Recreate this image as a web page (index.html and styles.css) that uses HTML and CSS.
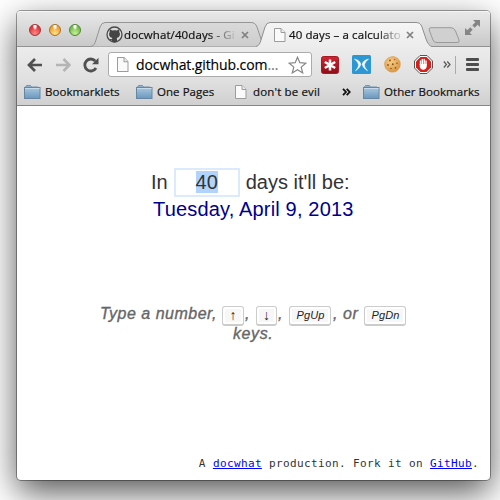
FILE: index.html
```
<!DOCTYPE html>
<html lang="en">
<head>
<meta charset="utf-8">
<title>40 days – a calculator</title>
<link rel="stylesheet" href="styles.css">
</head>
<body>
<svg class="defs" width="0" height="0" aria-hidden="true">
  <defs>
    <linearGradient id="folderFill" x1="0" y1="0" x2="0" y2="1"><stop offset="0" stop-color="#a9c7df"/><stop offset="1" stop-color="#6998bd"/></linearGradient>
    <linearGradient id="tabFill" x1="0" y1="0" x2="0" y2="1"><stop offset="0" stop-color="#dadada"/><stop offset="1" stop-color="#cccccc"/></linearGradient>
    <linearGradient id="tabActive" x1="0" y1="0" x2="0" y2="1"><stop offset="0" stop-color="#f5f5f5"/><stop offset="1" stop-color="#ececec"/></linearGradient>
    <linearGradient id="redFill" x1="0" y1="0" x2="0" y2="1"><stop offset="0" stop-color="#cf2633"/><stop offset="1" stop-color="#8e0d18"/></linearGradient>
    <radialGradient id="cookieFill" cx=".4" cy=".35" r=".7"><stop offset="0" stop-color="#f6cd85"/><stop offset="1" stop-color="#d99440"/></radialGradient>
    <symbol id="folder" viewBox="0 0 17 14"><path d="M1.500 3.500V2l1-1.500h4l1 1.500h6.500v1.500" fill="#8fb2cd" stroke="#7795ad"/><rect x=".5" y="2.500" width="15.500" height="11" fill="url(#folderFill)" stroke="#6686a2"/><path d="M1 3.500h14.500" stroke="#c6dcec"/></symbol>
    <symbol id="page" viewBox="0 0 12 14"><path d="M.5.5h6.500l4 4v9H.5z" fill="#fafafa" stroke="#9c9c9c"/><path d="M7 .5v4h4" fill="#eee" stroke="#9c9c9c"/></symbol>
    <symbol id="close" viewBox="0 0 8 8"><path d="M1 1l6 6M7 1L1 7" stroke="#808080" stroke-width="1.700"/></symbol>
  </defs>
</svg>
<div class="window">
  <div class="tabstrip">
    <div class="lights"><i class="light red"></i><i class="light amber"></i><i class="light green"></i></div>
    <div class="tab">
      <svg class="shape" width="176" height="25" viewBox="0 0 176 25"><path d="M0 24.500C3 24 4 21 5 18L9 5Q10.500.5 14 .5H160Q164.500.5 166 5L170 17Q172.500 24 176 24.500z" fill="url(#tabFill)"/><path d="M0 24.500C3 24 4 21 5 18L9 5Q10.500.5 14 .5H160Q164.500.5 166 5L170 17Q172.500 24 176 24.500" fill="none" stroke="#959595"/></svg>
      <svg class="octo" width="17" height="17" viewBox="0 0 17 17"><circle cx="8.500" cy="8.500" r="7.500" fill="#dadada" stroke="#4b4b4b" stroke-width="1.300"/><path d="M4 3.300l2.200 1.200q2.300-.6 4.600 0L13 3.300q.6 1.300.3 2.800 1.200 1.600.4 3.700-.7 1.900-3 2.200.4.600.3 1.500v2.200q-2.500 1-5 0v-1.500q-2 .3-2.600-1.500.9.6 2.600.4 0-.7.4-1.100-2.500-.4-3.100-2.200-.7-2.100.4-3.700Q3.400 4.600 4 3.300z" fill="#454545"/></svg>
      <span class="title">docwhat/40days - Gi</span>
      <svg class="x" width="8" height="8"><use href="#close"/></svg>
    </div>
    <div class="tab active">
      <svg class="shape" width="176" height="26" viewBox="0 0 176 26"><path d="M0 24.500C3 24 4 21 5 18L9 5Q10.500.5 14 .5H160Q164.500.5 166 5L170 17Q172.500 24 176 24.500V26H0z" fill="url(#tabActive)"/><path d="M0 24.500C3 24 4 21 5 18L9 5Q10.500.5 14 .5H160Q164.500.5 166 5L170 17Q172.500 24 176 24.500" fill="none" stroke="#909090"/></svg>
      <svg class="page" width="12" height="14"><use href="#page"/></svg>
      <span class="title">40 days – a calculato</span>
      <svg class="x" width="8" height="8"><use href="#close"/></svg>
    </div>
    <svg class="newtab" width="33" height="17" viewBox="0 0 33 17"><path d="M3 .7H23Q26 .7 27.500 4L31 13Q32 15.500 29 15.500H9Q6 15.500 5 13L1.200 3Q.5.700 3 .7z" fill="#d0d0d0" stroke="#9a9a9a"/></svg>
    <svg class="fullscreen" width="15" height="15" viewBox="0 0 15 15"><path d="M8 0h7v7l-2.300-2.300-3 3-2.400-2.400 3-3zM0 8l2.300 2.300 3-3 2.400 2.400-3 3L7 15H0z" fill="#858585"/><path d="M4.800 4.800l5.400 5.400" stroke="#d5d5d5" stroke-width="1.300"/></svg>
  </div>
  <div class="toolbar">
    <svg width="16" height="14" viewBox="0 0 16 14"><path d="M8 1L2 7l6 6M2 7h13" fill="none" stroke="#505050" stroke-width="2.700"/></svg>
    <svg class="forward" width="16" height="14" viewBox="0 0 16 14"><path d="M8.500 1l6 6-6 6M14 7H1" fill="none" stroke="#b4b4b4" stroke-width="2.500"/></svg>
    <svg class="reload" width="16" height="16" viewBox="0 0 16 16"><path d="M12.300 4A6 6 0 1 0 13 11" fill="none" stroke="#505050" stroke-width="2.800"/><path d="M15.500.8v6.500H9z" fill="#505050"/></svg>
    <div class="omnibox">
      <svg width="12" height="15" viewBox="0 0 12 14" preserveAspectRatio="none"><use href="#page"/></svg>
      <span class="url">docwhat.github.com<span class="dots">…</span></span>
      <svg class="star" width="19" height="18" viewBox="0 0 19 18"><path d="M9.500 1.200l2.300 5.500 6 .5-4.600 3.900 1.500 5.800-5.200-3.200-5.200 3.200 1.500-5.800L1.200 7.200l6-.5z" fill="#fff" stroke="#858585" stroke-width="1.200"/></svg>
    </div>
    <svg class="ext1" width="18" height="18" viewBox="0 0 18 18"><rect x=".5" y=".5" width="17" height="17" rx="2" fill="url(#redFill)" stroke="#a71a25"/><path d="M9 3.500v11M3.800 6l10.400 6M14.200 6L3.800 12" stroke="#fff" stroke-width="2.500"/></svg>
    <svg class="ext2" width="19" height="19" viewBox="0 0 19 19"><rect width="19" height="19" rx="1.500" fill="#2d97d3"/><path d="M2.500 4Q8.500 5.500 8.800 9.500Q8 13 3.500 15.800Q6.800 12 6.600 9.800Q6.200 7 2.500 4zM16.500 4Q10.500 5.500 10.200 9.500Q11 13 15.500 15.800Q12.200 12 12.400 9.800Q12.800 7 16.500 4z" fill="#fff" stroke="#fff" stroke-width=".5"/></svg>
    <svg class="ext3" width="17" height="17" viewBox="0 0 17 17"><path d="M8 .5q2-.4 3.500.7Q14 1.800 15 4q1.800 2 1.300 4.500.2 3-2 5-2 2.800-5.300 2.600-3 .4-5.300-1.600Q.8 12.500.7 9.500 0 6.500 1.800 4 4 1 8 .5z" fill="url(#cookieFill)" stroke="#d29747" stroke-width=".5"/><g fill="#8a5523"><circle cx="6" cy="4.500" r=".9"/><circle cx="10.700" cy="3.600" r=".7"/><circle cx="4" cy="9" r=".9"/><circle cx="8.800" cy="8.200" r="1"/><circle cx="13" cy="7.300" r=".8"/><circle cx="7" cy="12.500" r=".8"/><circle cx="11.500" cy="11.800" r=".9"/></g></svg>
    <svg class="ext4" width="19" height="19" viewBox="0 0 19 19"><path d="M6 .5h7l5.500 5.500v7L13 18.500H6L.5 13V6z" fill="#fff" stroke="#555"/><path d="M6.500 2h6L17 6.500v6L12.500 17h-6L2 12.500v-6z" fill="#d8201b"/><path d="M6.500 10V6M8.300 9V4.500M10.200 9V4.500M12 10V6" stroke="#fff" stroke-width="1.400" stroke-linecap="round"/><path d="M5.800 9h6.900v2.500q-.7 3.300-3.500 3.300t-3.400-3z" fill="#fff"/></svg>
    <svg class="more" width="8" height="7" viewBox="0 0 8 7"><path d="M.8.5l2.700 3-2.700 3M4.300.5L7 3.500l-2.700 3" fill="none" stroke="#555" stroke-width="1.200"/></svg>
    <i class="rule"></i>
    <div class="menu"><i></i><i></i><i></i></div>
  </div>
  <div class="bookmarks">
    <svg width="17" height="14"><use href="#folder"/></svg><span class="b1">Bookmarklets</span>
    <svg width="17" height="14"><use href="#folder"/></svg><span class="b2">One Pages</span>
    <svg class="bpage" width="12" height="14"><use href="#page"/></svg><span class="b3">don't be evil</span>
    <svg class="bmore" width="9" height="8" viewBox="0 0 9 8"><path d="M1 .8l3 3.200-3 3.200M4.700.8l3 3.200-3 3.200" fill="none" stroke="#111" stroke-width="1.800"/></svg>
    <svg width="17" height="14"><use href="#folder"/></svg><span class="b4">Other Bookmarks</span>
  </div>
  <main class="content">
    <div class="calc">
      <div class="question"><span>In</span><span class="days"><mark>40</mark></span><span>days it'll be:</span></div>
      <div class="answer">Tuesday, April 9, 2013</div>
    </div>
    <div class="help">
      <div class="helprow"><span class="type">Type a number,</span><kbd class="k1">↑</kbd><span class="c1">,</span><kbd class="k2">↓</kbd><span class="c2">,</span><kbd class="k3">PgUp</kbd><span class="c3">, or</span><kbd class="k3">PgDn</kbd></div>
      <div class="keys">keys.</div>
    </div>
    <footer>A <a href="#">docwhat</a> production. Fork it on <a href="#">GitHub</a>.</footer>
  </main>
</div>
</body>
</html>
```
FILE: styles.css
```
* { box-sizing: border-box; }
html, body { height: 100%; }
body {
  margin: 0;
  padding: 11px 10px 20px 17px;
  overflow: hidden;
  background: #fff;
  font-family: "Open Sans", "Noto Sans", sans-serif;
  color: #111;
}
svg { display: block; flex: none; }
.defs { position: absolute; }

.window {
  height: 469px;
  display: flex;
  flex-direction: column;
  border-radius: 4px;
  background: #fff;
  box-shadow: 0 0 0 1px rgba(0, 0, 0, .35), 0 12px 34px rgba(0, 0, 0, .68);
}

.tabstrip {
  height: 36px;
  flex: none;
  display: flex;
  align-items: flex-start;
  border-radius: 4px 4px 0 0;
  border-bottom: 1px solid #929292;
  background: linear-gradient(#e9e9e9, #c9c9c9);
  box-shadow: inset 0 1px #f5f5f5;
}
.lights { display: flex; gap: 8px; margin: 13px 10px 0 12px; }
.light {
  width: 12px;
  height: 12px;
  border-radius: 50%;
  border: 1px solid;
}
.red { background: radial-gradient(ellipse at 50% 10%, #fff 0 12%, transparent 35%), radial-gradient(circle at 50% 85%, #ff8b87, #e0383e 65%); border-color: #a33237; }
.amber { background: radial-gradient(ellipse at 50% 10%, #fff 0 12%, transparent 35%), radial-gradient(circle at 50% 85%, #ffe38a, #eca132 65%); border-color: #a8702b; }
.green { background: radial-gradient(ellipse at 50% 10%, #fff 0 12%, transparent 35%), radial-gradient(circle at 50% 85%, #c9f19a, #77bd4d 65%); border-color: #4f8439; }
.tab {
  position: relative;
  width: 176px;
  height: 25px;
  flex: none;
  margin-top: 11px;
  padding-left: 15px;
  display: flex;
  align-items: center;
  font-size: 11.5px;
}
.tab.active { margin-left: -11px; padding-left: 18px; }
.shape { position: absolute; left: 0; top: 0; }
.octo, .page, .x, .title { position: relative; }
.title {
  width: 113px;
  margin-left: 1px;
  white-space: nowrap;
  letter-spacing: .1px;
  -webkit-text-stroke: .2px;
  -webkit-mask-image: linear-gradient(90deg, #000 75%, transparent 100%);
  mask-image: linear-gradient(90deg, #000 75%, transparent 100%);
}
.active .title { width: 116px; margin-left: 3px; letter-spacing: .1px; }
.x { margin-left: 4px; }
.active .x { margin-left: 1px; }
.newtab { margin: 16px 0 0 -4px; }
.fullscreen { margin: 9px 0 0 4px; }

.toolbar {
  height: 33px;
  flex: none;
  display: flex;
  align-items: center;
  padding: 2px 10px 0 10px;
  background: linear-gradient(#ececec, #e0e0e0);
}
.forward { margin-left: 12px; }
.reload { margin-left: 12px; }
.omnibox {
  width: 204px;
  height: 25px;
  flex: none;
  margin-left: 9px;
  padding: 0 4px 0 8px;
  display: flex;
  align-items: center;
  border: 1px solid #ababab;
  border-radius: 3px;
  background: #fff;
}
.url { width: 143px; flex: none; margin-left: 7px; font-size: 14px; white-space: nowrap; color: #000; letter-spacing: -.1px; -webkit-text-stroke: .15px; }
.dots { color: #777; }
.star { margin-left: 9px; }
.ext1 { margin-left: 9px; }
.ext2 { margin-left: 13px; }
.ext3 { margin-left: 13px; }
.ext4 { margin-left: 13px; }
.more { margin-left: 10px; }
.rule { width: 1px; height: 18px; margin-left: 4px; background: #aaa; }
.menu { display: flex; flex-direction: column; gap: 2px; margin-left: 10px; }
.menu i { width: 13px; height: 3px; border-radius: 1px; background: #4d4d4d; }

.bookmarks {
  height: 26px;
  flex: none;
  display: flex;
  align-items: center;
  padding: 0 0 2px 7px;
  border-bottom: 1px solid #858585;
  background: linear-gradient(#e0e0e0, #d0d0d0);
  font-size: 11.5px;
  white-space: nowrap;
  letter-spacing: .05px;
  -webkit-text-stroke: .2px;
}
.bookmarks span { flex: none; margin-left: 4px; }
.b1 { width: 91px; }
.b2 { width: 78px; }
.bookmarks .b3 { width: 89px; margin-left: 6px; letter-spacing: .15px; }
.bmore { margin-right: 12px; }

.content {
  flex: 1;
  display: flex;
  flex-direction: column;
  font-family: "Liberation Sans", Arial, sans-serif;
}
.calc { margin-top: 62px; height: 138px; font-size: 20px; }
.question {
  display: flex;
  align-items: center;
  height: 29px;
  margin-left: 134px;
  color: #333;
}
.days {
  width: 66px;
  height: 29px;
  margin: 0 6px;
  padding-top: 1px;
  border: 2px solid #dbebfd;
  text-align: center;
  line-height: 22px;
}
mark { display: inline-block; height: 22px; background: #b2d3fb; color: #333; }
.answer { margin-left: 136px; line-height: 25px; letter-spacing: .17px; color: #00008b; }
.help {
  font-size: 16px;
  font-style: italic;
  color: #666;
  -webkit-text-stroke: .35px #666;
}
.helprow { display: flex; height: 20px; margin-left: 83px; line-height: 15px; white-space: nowrap; }
.type { width: 122px; letter-spacing: .5px; }
kbd {
  height: 20px;
  flex: none;
  border: 1px solid #ccc;
  border-bottom-width: 2px;
  border-radius: 3px;
  background: #f7f7f7;
  box-shadow: inset 0 0 0 2px #fff;
  color: #222;
  text-align: center;
  font: italic 11px/17px "Liberation Sans", Arial, sans-serif;
  letter-spacing: .1px;
  -webkit-text-stroke: 0;
}
.k1, .k2 { width: 22px; font-family: "Liberation Serif", serif; font-size: 14px; font-style: normal; }
.k2 { width: 21px; }
.k3 { width: 42px; padding-left: 1px; }
.c1, .c2 { width: 12px; padding-left: 1px; }
.c3 { width: 33px; padding-left: 2px; letter-spacing: .6px; }
.keys { margin-left: 216px; line-height: 15px; letter-spacing: .6px; }
footer {
  margin: auto 11px 9px 0;
  text-align: right;
  font: 11px/14px "DejaVu Sans Mono", monospace;
  letter-spacing: .38px;
  color: #333;
}
footer a { color: #00f; }
```
